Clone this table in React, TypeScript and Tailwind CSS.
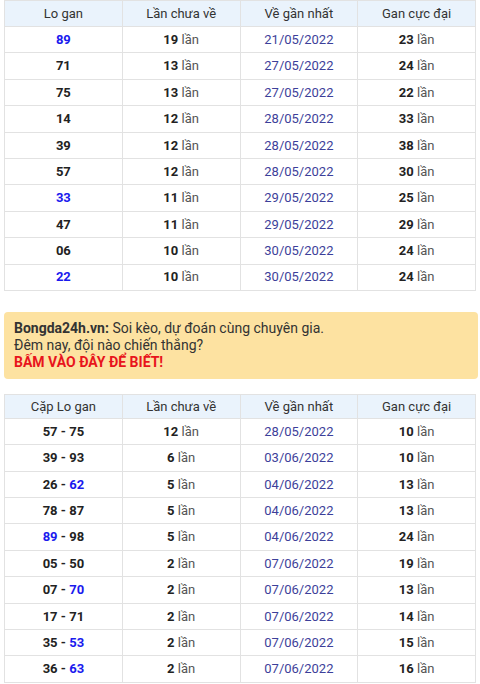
// Lo gan statistics page: two tables with a promo banner between them.

type Num = { v: string; blue?: boolean };

interface Row {
  nums: Num[];
  count: number;
  date: string;
  max: number;
}

const LO_GAN: Row[] = [
  { nums: [{ v: '89', blue: true }], count: 19, date: '21/05/2022', max: 23 },
  { nums: [{ v: '71' }], count: 13, date: '27/05/2022', max: 24 },
  { nums: [{ v: '75' }], count: 13, date: '27/05/2022', max: 22 },
  { nums: [{ v: '14' }], count: 12, date: '28/05/2022', max: 33 },
  { nums: [{ v: '39' }], count: 12, date: '28/05/2022', max: 38 },
  { nums: [{ v: '57' }], count: 12, date: '28/05/2022', max: 30 },
  { nums: [{ v: '33', blue: true }], count: 11, date: '29/05/2022', max: 25 },
  { nums: [{ v: '47' }], count: 11, date: '29/05/2022', max: 29 },
  { nums: [{ v: '06' }], count: 10, date: '30/05/2022', max: 24 },
  { nums: [{ v: '22', blue: true }], count: 10, date: '30/05/2022', max: 24 },
];

const CAP_LO_GAN: Row[] = [
  { nums: [{ v: '57' }, { v: '75' }], count: 12, date: '28/05/2022', max: 10 },
  { nums: [{ v: '39' }, { v: '93' }], count: 6, date: '03/06/2022', max: 10 },
  { nums: [{ v: '26' }, { v: '62', blue: true }], count: 5, date: '04/06/2022', max: 13 },
  { nums: [{ v: '78' }, { v: '87' }], count: 5, date: '04/06/2022', max: 13 },
  { nums: [{ v: '89', blue: true }, { v: '98' }], count: 5, date: '04/06/2022', max: 24 },
  { nums: [{ v: '05' }, { v: '50' }], count: 2, date: '07/06/2022', max: 19 },
  { nums: [{ v: '07' }, { v: '70', blue: true }], count: 2, date: '07/06/2022', max: 13 },
  { nums: [{ v: '17' }, { v: '71' }], count: 2, date: '07/06/2022', max: 14 },
  { nums: [{ v: '35' }, { v: '53', blue: true }], count: 2, date: '07/06/2022', max: 15 },
  { nums: [{ v: '36' }, { v: '63', blue: true }], count: 2, date: '07/06/2022', max: 16 },
];

function Times({ n }: { n: number }) {
  return (
    <>
      <b className="font-bold text-[#222]">{n}</b> <span className="text-[#555]">lần</span>
    </>
  );
}

function StatTable({ first, rows, headH }: { first: string; rows: Row[]; headH: string }) {
  const cell = 'border border-[#e2e2e2] text-center';
  return (
    <table className="w-full table-fixed border-collapse text-[13px] text-[#222]">
      <thead>
        <tr className={`${headH} bg-[#eaf3fc]`}>
          {[first, 'Lần chưa về', 'Về gần nhất', 'Gan cực đại'].map((h) => (
            <th key={h} className={`${cell} font-normal text-[#333]`}>
              {h}
            </th>
          ))}
        </tr>
      </thead>
      <tbody>
        {rows.map((r, i) => (
          <tr key={i} className="h-[26.4px]">
            <td className={`${cell} font-bold`}>
              {r.nums.map((n, j) => (
                <span key={j}>
                  {j > 0 && ' - '}
                  <span className={n.blue ? 'text-[#1a1aee]' : ''}>{n.v}</span>
                </span>
              ))}
            </td>
            <td className={cell}>
              <Times n={r.count} />
            </td>
            <td className={`${cell} text-[#3d3f9a]`}>{r.date}</td>
            <td className={cell}>
              <Times n={r.max} />
            </td>
          </tr>
        ))}
      </tbody>
    </table>
  );
}

export default function App() {
  return (
    <div className="w-[480px] bg-white px-1 font-['Roboto',sans-serif]">
      <StatTable first="Lo gan" rows={LO_GAN} headH="h-[26px]" />

      <div className="mt-[21px] mr-[-2px] rounded-[4px] bg-[#fde2a1] px-2.5 py-2 text-[14px] leading-[17px] text-[#333]">
        <div>
          <b className="font-bold">Bongda24h.vn:</b> Soi kèo, dự đoán cùng chuyên gia.
        </div>
        <div>Đêm nay, đội nào chiến thắng?</div>
        <div className="font-bold text-[#e8141c]">BẤM VÀO ĐÂY ĐỂ BIẾT!</div>
      </div>

      <div className="mt-[15px]">
        <StatTable first="Cặp Lo gan" rows={CAP_LO_GAN} headH="h-[24px]" />
      </div>
    </div>
  );
}
